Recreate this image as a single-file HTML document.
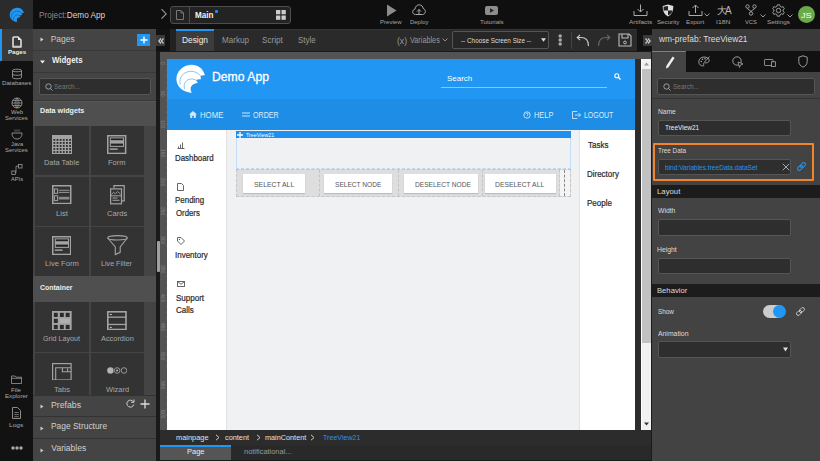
<!DOCTYPE html>
<html><head><meta charset="utf-8">
<style>
*{box-sizing:border-box;margin:0;padding:0}
html,body{width:820px;height:461px;overflow:hidden;background:#121212;font-family:"Liberation Sans",sans-serif;}
.a{position:absolute}
#top{left:0;top:0;width:820px;height:29px;background:#0f0f0f}
#logo{left:0;top:0;width:33px;height:29px;background:#2b2b2b}
#iconbar{left:0;top:29px;width:33px;height:432px;background:#121212}
.ib{position:absolute;left:0;width:33px;color:#bbb;font-size:6px;text-align:center;line-height:6px}
#lpanel{left:33px;top:29px;width:123px;height:432px;background:#444}
#tabbar{left:156px;top:29px;width:496px;height:22px;background:#2a2a2a;box-shadow:inset 0 1px 0 #343434}
#canvasbg{left:156px;top:51px;width:496px;height:410px;background:#1a1a1a}
#frame{left:160px;top:51px;width:475px;height:379px;background:#4d4d4d}
#rpanel{left:652px;top:29px;width:168px;height:432px;background:#434343}
.t{position:absolute;white-space:nowrap;transform-origin:0 0}
.btn{background:#fff;color:#555;font-size:7.5px;text-align:center;line-height:19px;box-shadow:0 1px 1px rgba(0,0,0,0.15)}
</style></head><body>

<div id="top" class="a">
 <div class="t" style="left:39.22px;top:10.00px;font-size:8.5px;color:#8a8a8a;transform:scaleX(0.965)">Project:<span style="color:#d8d8d8">Demo App</span></div>
 <svg class="a" style="left:160px;top:8px" width="8" height="12" viewBox="0 0 8 12"><path d="M1.5,1.2 L6.2,5.9 L1.5,10.6" fill="none" stroke="#9a9a9a" stroke-width="1.1"/></svg>
 <div class="a" style="left:170px;top:6px;width:121px;height:18px;border:1px solid #4e4e4e;border-radius:3px;background:#232323"></div>
 <div class="a" style="left:189px;top:7px;width:1px;height:16px;background:#4e4e4e"></div>
 <svg class="a" style="left:175px;top:9px" width="10" height="12" viewBox="0 0 10 12"><path d="M1.5,1.5 H6 L8.5,4 V10.5 H1.5 Z M6,1.5 V4 H8.5" fill="none" stroke="#777" stroke-width="1"/></svg>
 <div class="t" style="left:195.05px;top:10.00px;font-size:8.5px;font-weight:bold;color:#f2f2f2;transform:scaleX(0.952)">Main</div>
 <div class="a" style="left:215.3px;top:10.3px;width:2.6px;height:2.6px;border-radius:50%;background:#2d8ff0"></div>
 <svg class="a" style="left:276px;top:10px" width="10" height="10" viewBox="0 0 10 10"><rect x="0" y="0" width="4.3" height="4.3" fill="#ccc"/><rect x="5.5" y="0" width="4.3" height="4.3" fill="#ccc"/><rect x="0" y="5.5" width="4.3" height="4.3" fill="#ccc"/><rect x="5.5" y="5.5" width="4.3" height="4.3" fill="#ccc"/></svg>
 <svg class="a" style="left:386px;top:4px" width="11" height="13" viewBox="0 0 11 13"><path d="M1,0.5 L10.5,6.5 L1,12.5 Z" fill="#8c8c8c"/></svg>
 <div class="t" style="left:380.40px;top:19.00px;font-size:6px;color:#a6a6a6;transform:scaleX(1.011)">Preview</div>
 <svg class="a" style="left:412px;top:4px" width="14" height="12" viewBox="0 0 14 12"><path d="M3.5,10.5 C1.5,10.5 0.7,9 0.7,7.8 C0.7,6.3 1.8,5.3 3,5.2 C3.2,2.6 5,0.8 7.2,0.8 C9.4,0.8 11,2.4 11.2,4.6 C12.5,4.8 13.3,6 13.3,7.5 C13.3,9 12.3,10.5 10.5,10.5 Z" fill="none" stroke="#aaa" stroke-width="1"/><path d="M7,10.5 V5.5 M5,7.5 L7,5.5 L9,7.5" fill="none" stroke="#aaa" stroke-width="1"/></svg>
 <div class="t" style="left:409.51px;top:19.00px;font-size:6px;color:#a6a6a6;transform:scaleX(0.991)">Deploy</div>
 <svg class="a" style="left:485px;top:6px" width="13" height="9" viewBox="0 0 13 9"><rect x="0" y="0" width="13" height="9" rx="2" fill="#8c8c8c"/><path d="M5,2.3 L9,4.5 L5,6.7 Z" fill="#222"/></svg>
 <div class="t" style="left:479.56px;top:19.00px;font-size:6px;color:#a6a6a6;transform:scaleX(1.038)">Tutorials</div>

 <svg class="a" style="left:633px;top:4px" width="15" height="13" viewBox="0 0 15 13"><path d="M7.5,0.5 V8 M4.5,5 L7.5,8 L10.5,5" fill="none" stroke="#aaa" stroke-width="1"/><path d="M1,7 V11.5 H14 V7" fill="none" stroke="#aaa" stroke-width="1"/></svg>
 <div class="t" style="left:628.98px;top:19.00px;font-size:6px;color:#a6a6a6;transform:scaleX(1.072)">Artifacts</div>
 <svg class="a" style="left:662px;top:4px" width="12" height="13" viewBox="0 0 12 13"><path d="M6,0.6 L11.3,2 C11.3,7 10,10.5 6,12.4 C2,10.5 0.7,7 0.7,2 Z" fill="#ddd"/><path d="M6,2 V6.5 H1.6 C1.6,3.5 1.6,3 1.6,2.7 Z M6,6.5 H10.4 C10.1,8.8 8.8,10.4 6,11.3 Z" fill="#222"/></svg>
 <div class="t" style="left:656.72px;top:19.00px;font-size:6px;color:#a6a6a6;transform:scaleX(1.029)">Security</div>
 <svg class="a" style="left:688px;top:4px" width="15" height="13" viewBox="0 0 15 13"><path d="M7.5,9 V1 M4.5,4 L7.5,1 L10.5,4" fill="none" stroke="#aaa" stroke-width="1"/><path d="M1,7 V11.5 H14 V7" fill="none" stroke="#aaa" stroke-width="1"/></svg>
 <svg class="a" style="left:704px;top:13px" width="6" height="4" viewBox="0 0 6 4"><path d="M0.5,0.5 L3,3 L5.5,0.5" fill="none" stroke="#aaa" stroke-width="0.9"/></svg>
 <div class="t" style="left:686.28px;top:19.00px;font-size:6px;color:#a6a6a6;transform:scaleX(1.048)">Export</div>
 <div class="t" style="left:716.5px;top:4px;font-size:10px;color:#bbb;letter-spacing:-1.6px">&#22823;A</div>
 <div class="t" style="left:716.07px;top:19.00px;font-size:6px;color:#a6a6a6;transform:scaleX(1.135)">I18N</div>
 <svg class="a" style="left:745px;top:4px" width="12" height="12" viewBox="0 0 12 12"><circle cx="2.5" cy="2.5" r="1.7" fill="none" stroke="#aaa" stroke-width="0.9"/><circle cx="9.5" cy="2.5" r="1.7" fill="none" stroke="#aaa" stroke-width="0.9"/><circle cx="6" cy="9.5" r="1.7" fill="none" stroke="#aaa" stroke-width="0.9"/><path d="M2.5,4.2 C2.5,6 6,6 6,7.8 M9.5,4.2 C9.5,6 6,6 6,7.8" fill="none" stroke="#aaa" stroke-width="0.9"/></svg>
 <svg class="a" style="left:760px;top:14px" width="6" height="4" viewBox="0 0 6 4"><path d="M0.5,0.5 L3,3 L5.5,0.5" fill="none" stroke="#aaa" stroke-width="0.9"/></svg>
 <div class="t" style="left:744.97px;top:19.00px;font-size:6px;color:#a6a6a6;transform:scaleX(0.963)">VCS</div>
 <svg class="a" style="left:772px;top:4px" width="13" height="13" viewBox="0 0 13 13"><path d="M5.3,0.8 H7.7 L8.1,2.4 L9.6,3.2 L11.1,2.6 L12.3,4.7 L11.1,5.8 V7.2 L12.3,8.3 L11.1,10.4 L9.6,9.8 L8.1,10.6 L7.7,12.2 H5.3 L4.9,10.6 L3.4,9.8 L1.9,10.4 L0.7,8.3 L1.9,7.2 V5.8 L0.7,4.7 L1.9,2.6 L3.4,3.2 L4.9,2.4 Z" fill="none" stroke="#aaa" stroke-width="0.9"/><circle cx="6.5" cy="6.5" r="2.2" fill="none" stroke="#aaa" stroke-width="0.9"/></svg>
 <svg class="a" style="left:787px;top:14px" width="6" height="4" viewBox="0 0 6 4"><path d="M0.5,0.5 L3,3 L5.5,0.5" fill="none" stroke="#aaa" stroke-width="0.9"/></svg>
 <div class="t" style="left:767.31px;top:19.00px;font-size:6px;color:#a6a6a6;transform:scaleX(1.057)">Settings</div>
 <div class="a" style="left:798px;top:6px;width:17px;height:17px;border-radius:50%;background:#6aaa4a"></div>
 <div class="t" style="left:801.36px;top:11.00px;font-size:8px;color:#fff;transform:scaleX(1.129)">JS</div>
</div>
<div id="logo" class="a"><svg class="a" style="left:9px;top:6.85px" width="16" height="16" viewBox="0 0 32 32"><path fill="#2196f3" d="M29.9,12.2 C28,5 22.5,1.5 16,1.7 C7.8,2 1.4,8.5 1.4,16 C1.4,23 7,29 16.7,29.9 C15.3,27.5 15.3,24.5 16.5,23 C17.8,21.3 20,20.3 22.9,20.1 C22.3,18.8 21.6,17.5 20.8,17 C22.5,16.3 24.5,16.2 26,16.3 C25.8,15 25.5,13.6 25.7,12.8 C27,12.2 28.5,12 29.9,12.2 Z"/><path d="M5.2,21.5 C3.5,14 9,8.3 16,8.3 C19.5,8.3 23,9.8 25.7,12.8 M9.5,26 C8,20 11.5,16 16.7,16 C18.5,16 19.8,16.4 20.8,17" fill="none" stroke="#2b2b2b" stroke-width="0.7"/></svg></div>


<div id="iconbar" class="a">
 <div class="a" style="left:0;top:0;width:33px;height:32px;background:#3a3a3a"></div>
 <div class="a" style="left:0;top:0;width:2px;height:32px;background:#2196f3"></div>
</div>
<div class="a" style="left:0;top:29px;width:33px;height:432px">
 <svg class="a" style="left:12px;top:6.7px" width="10" height="12.2" viewBox="0 0 10 12.2"><path d="M1,10.5 V2 Q1,1 2,1 H6 L9,4 V10.5 Z" fill="#3a3a3a" stroke="#ddd" stroke-width="1.6"/><path d="M6,1 V4 H9" fill="#eee"/><path d="M0.6,11.3 H9.4" stroke="#b8b8b8" stroke-width="1.6"/></svg>
 <div class="t" style="left:7.59px;top:20.00px;font-size:6px;font-weight:bold;color:#eee;transform:scaleX(1.022)">Pages</div>
 <svg class="a" style="left:11px;top:39px" width="12" height="12" viewBox="0 0 12 12"><path d="M1.5,2.5 C1.5,0.8 10.5,0.8 10.5,2.5 V9.5 C10.5,11.2 1.5,11.2 1.5,9.5 Z M1.5,2.5 C1.5,4.2 10.5,4.2 10.5,2.5 M1.5,6 C1.5,7.7 10.5,7.7 10.5,6" fill="none" stroke="#999" stroke-width="0.9"/></svg>
 <div class="t" style="left:2.09px;top:51.00px;font-size:5.6px;color:#aaa;transform:scaleX(1.097)">Databases</div>
 <svg class="a" style="left:11px;top:68px" width="12" height="12" viewBox="0 0 12 12"><circle cx="6" cy="6" r="5" fill="none" stroke="#999" stroke-width="0.9"/><path d="M1,6 H11 M1.7,3.5 H10.3 M1.7,8.5 H10.3 M6,1 V11 M6,1 C3.5,3 3.5,9 6,11 M6,1 C8.5,3 8.5,9 6,11" fill="none" stroke="#999" stroke-width="0.7"/></svg>
 <div class="t" style="left:10.77px;top:80.00px;font-size:5.6px;color:#aaa;transform:scaleX(1.058)">Web</div><div class="t" style="left:5.33px;top:86.00px;font-size:5.6px;color:#aaa;transform:scaleX(1.056)">Services</div>
 <svg class="a" style="left:11px;top:100px" width="12" height="11" viewBox="0 0 12 11"><path d="M4,0.5 V2.5 M6,0.5 V2.5 M8,0.5 V2.5" stroke="#999" stroke-width="0.7"/><path d="M1,4 H11 C11,8 9,10 6,10 C3,10 1,8 1,4 Z" fill="none" stroke="#999" stroke-width="0.9"/></svg>
 <div class="t" style="left:11.21px;top:112.00px;font-size:5.6px;color:#aaa;transform:scaleX(1.030)">Java</div><div class="t" style="left:5.33px;top:118.00px;font-size:5.6px;color:#aaa;transform:scaleX(1.056)">Services</div>
 <svg class="a" style="left:11px;top:135px" width="12" height="11" viewBox="0 0 12 11"><rect x="7.5" y="0.5" width="3.5" height="3.5" fill="none" stroke="#999" stroke-width="0.8"/><rect x="0.8" y="7" width="3.5" height="3.5" fill="none" stroke="#999" stroke-width="0.8"/><path d="M7.5,2.2 H5 V8.7 H4.3" fill="none" stroke="#999" stroke-width="0.8"/></svg>
 <div class="t" style="left:10.79px;top:147.00px;font-size:5.6px;color:#aaa;transform:scaleX(1.015)">APIs</div>
 <svg class="a" style="left:11px;top:346px" width="11" height="9" viewBox="0 0 11 9"><path d="M0.5,1 H4 L5,2.2 H10.5 V8.5 H0.5 Z M0.5,3.3 H10.5" fill="none" stroke="#999" stroke-width="0.8"/></svg>
 <div class="t" style="left:10.98px;top:358.00px;font-size:5.6px;color:#aaa;transform:scaleX(1.118)">File</div><div class="t" style="left:4.69px;top:364.00px;font-size:5.6px;color:#aaa;transform:scaleX(1.099)">Explorer</div>
 <svg class="a" style="left:12px;top:378px" width="9" height="12" viewBox="0 0 9 12"><path d="M0.5,0.5 H5.5 L8.5,3.5 V11.5 H0.5 Z" fill="none" stroke="#999" stroke-width="0.9"/><path d="M2.3,5.5 H6.7 M2.3,7.6 H6.7 M2.3,9.7 H6.7" stroke="#999" stroke-width="0.7"/></svg>
 <div class="t" style="left:8.86px;top:393.00px;font-size:5.6px;color:#aaa;transform:scaleX(1.176)">Logs</div>
 <svg class="a" style="left:10.5px;top:416.5px" width="12" height="4" viewBox="0 0 12 4"><circle cx="2" cy="2" r="1.7" fill="#aaa"/><circle cx="6" cy="2" r="1.7" fill="#aaa"/><circle cx="10" cy="2" r="1.7" fill="#aaa"/></svg>
</div>
<div id="lpanel" class="a">
 <div class="a" style="left:0;top:0;width:123px;height:22px;border-bottom:1px solid #383838"></div>
 <svg class="a" style="left:7px;top:8px" width="4" height="5" viewBox="0 0 4 5"><path d="M0.5,0.5 L3.5,2.5 L0.5,4.5 Z" fill="#d8d8d8"/></svg>
 <div class="t" style="left:17.70px;top:5.00px;font-size:8.5px;color:#c8c8c8">Pages</div>
 <div class="a" style="left:104px;top:5px;width:13px;height:12px;background:#2196f3"></div>
 <svg class="a" style="left:106.5px;top:7px" width="8" height="8" viewBox="0 0 8 8"><path d="M4,0.5 V7.5 M0.5,4 H7.5" stroke="#fff" stroke-width="1.4"/></svg>
 <div class="a" style="left:0;top:22px;width:123px;height:22px;border-bottom:1px solid #383838"></div>
 <svg class="a" style="left:7px;top:31px" width="5" height="4" viewBox="0 0 5 4"><path d="M0,0.5 H5 L2.5,3.5 Z" fill="#eee"/></svg>
 <div class="t" style="left:18.60px;top:26.00px;font-size:8.5px;font-weight:bold;color:#f0f0f0;transform:scaleX(0.925)">Widgets</div>
 <div class="a" style="left:6px;top:49px;width:112px;height:17px;background:#2e2e2e;border:1px solid #555;border-radius:2px"></div>
 <svg class="a" style="left:12px;top:54px" width="8" height="8" viewBox="0 0 8 8"><circle cx="3.5" cy="3.5" r="2.7" fill="none" stroke="#aaa" stroke-width="0.9"/><path d="M5.5,5.5 L7.5,7.5" stroke="#aaa" stroke-width="0.9"/></svg>
 <div class="t" style="left:21.41px;top:54.00px;font-size:7px;color:#777;transform:scaleX(0.935)">Search...</div>
 <div class="a" style="left:0;top:71px;width:123px;height:26px;background:#4f4f4f;border-top:1px solid #393939"></div>
 <div class="a" style="left:0;top:72px;width:123px;height:1px;background:#575757"></div>
 <div class="t" style="left:6.91px;top:77.00px;font-size:7.5px;font-weight:bold;color:#eee;transform:scaleX(0.959)">Data widgets</div>
</div>
<div class="a" style="left:33px;top:29px;width:123px;height:366px;overflow:hidden">
 <div class="a" style="left:2px;top:97px;width:54px;height:49px;background:#333"></div>
 <div class="a" style="left:57.5px;top:97px;width:53.5px;height:49px;background:#333"></div>
 <div class="a" style="left:2px;top:147.5px;width:54px;height:49px;background:#333"></div>
 <div class="a" style="left:57.5px;top:147.5px;width:53.5px;height:49px;background:#333"></div>
 <div class="a" style="left:2px;top:198px;width:54px;height:49px;background:#333"></div>
 <div class="a" style="left:57.5px;top:198px;width:53.5px;height:49px;background:#333"></div>
 <div class="a" style="left:0;top:247px;width:123px;height:26px;background:#4f4f4f"></div>
 <div class="t" style="left:7.12px;top:254.00px;font-size:7.5px;font-weight:bold;color:#eee;transform:scaleX(0.928)">Container</div>
 <div class="a" style="left:2px;top:273px;width:54px;height:50px;background:#333"></div>
 <div class="a" style="left:57.5px;top:273px;width:53.5px;height:50px;background:#333"></div>
 <div class="a" style="left:2px;top:324px;width:54px;height:50px;background:#333"></div>
 <div class="a" style="left:57.5px;top:324px;width:53.5px;height:50px;background:#333"></div>
</div>

<div class="a" style="left:33px;top:29px;width:123px;height:366px;overflow:hidden;pointer-events:none">
 <div class="t" style="left:11.09px;top:129.00px;font-size:8px;color:#a8a8a8;transform:scaleX(0.925)">Data Table</div>
 <div class="t" style="left:75.28px;top:129.00px;font-size:8px;color:#a8a8a8;transform:scaleX(0.938)">Form</div>
 <div class="t" style="left:22.81px;top:180.00px;font-size:8px;color:#a8a8a8;transform:scaleX(0.950)">List</div>
 <div class="t" style="left:73.81px;top:180.00px;font-size:8px;color:#a8a8a8;transform:scaleX(0.950)">Cards</div>
 <div class="t" style="left:12.04px;top:230.00px;font-size:8px;color:#a8a8a8;transform:scaleX(0.950)">Live Form</div>
 <div class="t" style="left:68.11px;top:230.00px;font-size:8px;color:#a8a8a8;transform:scaleX(0.894)">Live Filter</div>
 <div class="t" style="left:10.14px;top:305.00px;font-size:8px;color:#a8a8a8;transform:scaleX(0.892)">Grid Layout</div>
 <div class="t" style="left:67.88px;top:305.00px;font-size:8px;color:#a8a8a8;transform:scaleX(0.922)">Accordion</div>
 <div class="t" style="left:21.02px;top:356.00px;font-size:8px;color:#a8a8a8;transform:scaleX(0.950)">Tabs</div>
 <div class="t" style="left:72.96px;top:356.00px;font-size:8px;color:#a8a8a8;transform:scaleX(0.924)">Wizard</div>
</div>
<svg class="a" style="left:51.75px;top:134.8px" width="20.3" height="19.3" viewBox="0 0 20.3 19.3"><rect x="0" y="0" width="20.3" height="19.3" fill="#a3a3a3"/><rect x="1.45" y="4.00" width="1.80" height="1.80" fill="#2b2b2b"/><rect x="1.45" y="7.03" width="1.80" height="1.80" fill="#2b2b2b"/><rect x="1.45" y="10.06" width="1.80" height="1.80" fill="#2b2b2b"/><rect x="1.45" y="13.09" width="1.80" height="1.80" fill="#2b2b2b"/><rect x="1.45" y="16.12" width="1.80" height="1.80" fill="#2b2b2b"/><rect x="4.59" y="4.00" width="1.80" height="1.80" fill="#2b2b2b"/><rect x="4.59" y="7.03" width="1.80" height="1.80" fill="#2b2b2b"/><rect x="4.59" y="10.06" width="1.80" height="1.80" fill="#2b2b2b"/><rect x="4.59" y="13.09" width="1.80" height="1.80" fill="#2b2b2b"/><rect x="4.59" y="16.12" width="1.80" height="1.80" fill="#2b2b2b"/><rect x="7.73" y="4.00" width="1.80" height="1.80" fill="#2b2b2b"/><rect x="7.73" y="7.03" width="1.80" height="1.80" fill="#2b2b2b"/><rect x="7.73" y="10.06" width="1.80" height="1.80" fill="#2b2b2b"/><rect x="7.73" y="13.09" width="1.80" height="1.80" fill="#2b2b2b"/><rect x="7.73" y="16.12" width="1.80" height="1.80" fill="#2b2b2b"/><rect x="10.87" y="4.00" width="1.80" height="1.80" fill="#2b2b2b"/><rect x="10.87" y="7.03" width="1.80" height="1.80" fill="#2b2b2b"/><rect x="10.87" y="10.06" width="1.80" height="1.80" fill="#2b2b2b"/><rect x="10.87" y="13.09" width="1.80" height="1.80" fill="#2b2b2b"/><rect x="10.87" y="16.12" width="1.80" height="1.80" fill="#2b2b2b"/><rect x="14.01" y="4.00" width="1.80" height="1.80" fill="#2b2b2b"/><rect x="14.01" y="7.03" width="1.80" height="1.80" fill="#2b2b2b"/><rect x="14.01" y="10.06" width="1.80" height="1.80" fill="#2b2b2b"/><rect x="14.01" y="13.09" width="1.80" height="1.80" fill="#2b2b2b"/><rect x="14.01" y="16.12" width="1.80" height="1.80" fill="#2b2b2b"/><rect x="17.15" y="4.00" width="1.80" height="1.80" fill="#2b2b2b"/><rect x="17.15" y="7.03" width="1.80" height="1.80" fill="#2b2b2b"/><rect x="17.15" y="10.06" width="1.80" height="1.80" fill="#2b2b2b"/><rect x="17.15" y="13.09" width="1.80" height="1.80" fill="#2b2b2b"/><rect x="17.15" y="16.12" width="1.80" height="1.80" fill="#2b2b2b"/></svg>
<svg class="a" style="left:107.2px;top:134.8px" width="19.4" height="19.2" viewBox="0 0 19.4 19.2"><rect x="0.75" y="0.75" width="17.9" height="17.7" fill="none" stroke="#a3a3a3" stroke-width="1.5"/><rect x="2.8" y="2.4" width="14.2" height="9.5" fill="#a3a3a3"/><rect x="3.8" y="3.4" width="12.2" height="1.8" fill="#222"/><rect x="3.8" y="8.6" width="12.2" height="2.2" fill="#222"/><rect x="2.8" y="13.4" width="7.8" height="1.5" fill="#a3a3a3"/></svg>
<svg class="a" style="left:52.1px;top:185.2px" width="19.5" height="19.3" viewBox="0 0 19.5 19.3"><rect x="0.75" y="0.75" width="18" height="17.8" fill="none" stroke="#a3a3a3" stroke-width="1.5"/><rect x="2.4" y="4" width="3.2" height="4.3" fill="none" stroke="#a3a3a3" stroke-width="1"/><rect x="2.4" y="10.8" width="3.2" height="4.8" fill="none" stroke="#a3a3a3" stroke-width="1"/><rect x="6.8" y="4.8" width="10.6" height="0.9" fill="#a3a3a3"/><rect x="6.8" y="6.9" width="10.6" height="0.9" fill="#a3a3a3"/><rect x="6.8" y="11.8" width="10.6" height="2.7" fill="#8a8a8a"/></svg>
<svg class="a" style="left:109.7px;top:185.2px" width="15" height="19.5" viewBox="0 0 15 19.5"><path d="M4,3 V0.6 H14.2 V15.8 H12" fill="none" stroke="#a3a3a3" stroke-width="1.2"/><rect x="0.6" y="3.9" width="10.9" height="14.9" fill="#333" stroke="#a3a3a3" stroke-width="1.2"/><path d="M1.5,9.5 L3.5,7.3 L5.5,8.8 L7.5,6.5 L10.5,9" fill="none" stroke="#a3a3a3" stroke-width="0.9"/><path d="M0.6,10.8 H11.5" stroke="#a3a3a3" stroke-width="1"/><path d="M2.5,13 H7.5 M2.5,15.3 H9.5" stroke="#a3a3a3" stroke-width="1"/></svg>
<svg class="a" style="left:51.9px;top:235.6px" width="19.4" height="19.2" viewBox="0 0 19.4 19.2"><rect x="0.75" y="0.75" width="17.9" height="17.7" fill="none" stroke="#a3a3a3" stroke-width="1.5"/><rect x="2.8" y="2.4" width="14.2" height="9.5" fill="#a3a3a3"/><rect x="3.8" y="3.4" width="12.2" height="1.8" fill="#222"/><rect x="3.8" y="8.6" width="12.2" height="2.2" fill="#222"/><rect x="2.8" y="13.4" width="7.8" height="1.5" fill="#a3a3a3"/></svg>
<svg class="a" style="left:106.5px;top:235px" width="21" height="20.5" viewBox="0 0 21 20.5"><ellipse cx="10.5" cy="2.8" rx="9.8" ry="2.2" fill="none" stroke="#a3a3a3" stroke-width="1.1"/><path d="M0.7,3 L8.3,12 V19.6 L13.2,17.3 V12 L20.3,3" fill="none" stroke="#a3a3a3" stroke-width="1.1"/></svg>
<svg class="a" style="left:51.9px;top:311.2px" width="19.7" height="19.3" viewBox="0 0 19.7 19.3"><rect x="0" y="0" width="19.7" height="19.3" fill="#a3a3a3"/><rect x="1.85" y="1.80" width="3.90" height="4.20" fill="#2b2b2b"/><rect x="1.85" y="7.80" width="3.90" height="4.20" fill="#2b2b2b"/><rect x="1.85" y="13.90" width="3.90" height="4.20" fill="#2b2b2b"/><rect x="7.90" y="1.80" width="3.90" height="4.20" fill="#2b2b2b"/><rect x="7.90" y="13.90" width="3.90" height="4.20" fill="#2b2b2b"/><rect x="13.70" y="1.80" width="3.90" height="4.20" fill="#2b2b2b"/><rect x="13.70" y="13.90" width="3.90" height="4.20" fill="#2b2b2b"/><rect x="7.9" y="7.8" width="10" height="4.2" fill="#b0b0b0"/></svg>
<svg class="a" style="left:107.2px;top:311.2px" width="19.8" height="19.3" viewBox="0 0 19.8 19.3"><rect x="0.8" y="0.8" width="18.2" height="17.7" fill="none" stroke="#a3a3a3" stroke-width="1.6"/><rect x="0" y="5.5" width="19.8" height="1.3" fill="#a3a3a3"/><rect x="0" y="12.8" width="19.8" height="1.3" fill="#a3a3a3"/><rect x="2.8" y="3" width="2" height="1" fill="#ccc"/><rect x="2.8" y="15.9" width="2" height="1" fill="#ccc"/></svg>
<svg class="a" style="left:52.1px;top:362.7px" width="19.7" height="17.6" viewBox="0 0 19.7 17.6"><rect x="0.6" y="0.6" width="18.5" height="16.4" fill="none" stroke="#a3a3a3" stroke-width="1.2"/><path d="M3.7,17 V4.7 H19.1 M10.4,4.7 V8.8 H19.1 M15.6,5.5 V8.2" fill="none" stroke="#a3a3a3" stroke-width="1.1"/></svg>
<svg class="a" style="left:106.8px;top:367.2px" width="20.6" height="7" viewBox="0 0 20.6 7"><circle cx="3.4" cy="3.5" r="3.2" fill="#b3b3b3"/><circle cx="10.1" cy="3.5" r="2.8" fill="none" stroke="#a3a3a3" stroke-width="0.9"/><circle cx="10.1" cy="3.5" r="0.9" fill="#ccc"/><circle cx="17" cy="3.5" r="2.8" fill="none" stroke="#a3a3a3" stroke-width="0.9"/></svg>
<div class="a" style="left:33px;top:395px;width:123px;height:66px;background:#444">
 <div class="a" style="left:0;top:0;width:123px;height:1px;background:#333"></div>
 <div class="a" style="left:0;top:21px;width:123px;height:1px;background:#333"></div>
 <div class="a" style="left:0;top:43px;width:123px;height:1px;background:#333"></div>
 <svg class="a" style="left:7px;top:9px" width="4" height="5" viewBox="0 0 4 5"><path d="M0.5,0.5 L3.5,2.5 L0.5,4.5 Z" fill="#ccc"/></svg>
 <div class="t" style="left:17.68px;top:5.00px;font-size:8.5px;color:#d0d0d0;transform:scaleX(1.025)">Prefabs</div>
 <svg class="a" style="left:93px;top:4px" width="9" height="9" viewBox="0 0 9 9"><path d="M7.5,3 A3.5,3.5 0 1 0 7.8,5.5" fill="none" stroke="#ccc" stroke-width="1"/><path d="M8,0.5 V3.3 H5.2" fill="none" stroke="#ccc" stroke-width="1"/></svg>
 <svg class="a" style="left:107px;top:4px" width="10" height="10" viewBox="0 0 10 10"><path d="M5,0.5 V9.5 M0.5,5 H9.5" stroke="#ddd" stroke-width="1.3"/></svg>
 <svg class="a" style="left:7px;top:31px" width="4" height="5" viewBox="0 0 4 5"><path d="M0.5,0.5 L3.5,2.5 L0.5,4.5 Z" fill="#ccc"/></svg>
 <div class="t" style="left:17.71px;top:26.00px;font-size:8.5px;color:#d0d0d0;transform:scaleX(0.989)">Page Structure</div>
 <svg class="a" style="left:7px;top:53px" width="4" height="5" viewBox="0 0 4 5"><path d="M0.5,0.5 L3.5,2.5 L0.5,4.5 Z" fill="#ccc"/></svg>
 <div class="t" style="left:18.36px;top:48.00px;font-size:8.5px;color:#d0d0d0">Variables</div>
</div>
<div class="a" style="left:156px;top:29px;width:4px;height:432px;background:#121212"></div>



<div id="tabbar" class="a">
 <div class="a" style="left:0;top:0;width:14px;height:22px;background:#121212"></div>
 <div class="a" style="left:0px;top:6px;width:9px;height:11px;background:#3a3a3a"></div>
 <svg class="a" style="left:1.5px;top:8.5px" width="6" height="6" viewBox="0 0 6 6"><path d="M3,0.5 L0.8,3 L3,5.5 M5.5,0.5 L3.3,3 L5.5,5.5" fill="none" stroke="#ccc" stroke-width="1.15"/></svg>
 <div class="a" style="left:14px;top:0;width:6px;height:22px;background:#222"></div>
 <div class="a" style="left:20px;top:0;width:38px;height:22px;background:#3c3c3c;border-top:2px solid #2196f3"></div>
 <div class="t" style="left:26.01px;top:6.00px;font-size:8.5px;color:#eee;transform:scaleX(0.983)">Design</div>
 <div class="t" style="left:65.53px;top:6.00px;font-size:8.5px;color:#999;transform:scaleX(0.949)">Markup</div>
 <div class="t" style="left:106.43px;top:6.00px;font-size:8.5px;color:#999;transform:scaleX(0.959)">Script</div>
 <div class="t" style="left:142.04px;top:6.00px;font-size:8.5px;color:#999;transform:scaleX(0.937)">Style</div>
 <div class="t" style="left:241.46px;top:7.00px;font-size:9px;color:#999;transform:scaleX(0.959)">(x)</div>
 <div class="t" style="left:253.96px;top:6.00px;font-size:8.5px;color:#999;transform:scaleX(0.856)">Variables</div>
 <svg class="a" style="left:286px;top:9px" width="6" height="4" viewBox="0 0 6 4"><path d="M0.5,0.5 L3,3 L5.5,0.5" fill="none" stroke="#999" stroke-width="0.9"/></svg>
 <div class="a" style="left:296px;top:2px;width:97px;height:18px;border:1px solid #555;border-radius:2px;background:#262626"></div>
 <div class="t" style="left:304.71px;top:7.00px;font-size:7.5px;color:#ddd;transform:scaleX(0.849)">-- Choose Screen Size --</div>
 <svg class="a" style="left:385px;top:9px" width="5" height="4" viewBox="0 0 5 4"><path d="M0,0.3 H5 L2.5,3.7 Z" fill="#ddd"/></svg>
 <svg class="a" style="left:402px;top:5px" width="4.4" height="12" viewBox="0 0 4.4 12"><circle cx="2.2" cy="1.9" r="1.75" fill="#aaa"/><circle cx="2.2" cy="6" r="1.75" fill="#aaa"/><circle cx="2.2" cy="10.1" r="1.75" fill="#aaa"/></svg>
 <div class="a" style="left:415px;top:3px;width:1px;height:17px;background:#444"></div>
 <svg class="a" style="left:420px;top:5px" width="14" height="13" viewBox="0 0 14 13"><path d="M12.5,12 C12.5,6 9.5,3.5 5,3.5 H1.5 M4,0.8 L1.2,3.5 L4,6.2" fill="none" stroke="#ccc" stroke-width="1.1"/></svg>
 <svg class="a" style="left:441px;top:5px" width="14" height="13" viewBox="0 0 14 13"><path d="M1.5,12 C1.5,6 4.5,3.5 9,3.5 H12.5 M10,0.8 L12.8,3.5 L10,6.2" fill="none" stroke="#666" stroke-width="1.1"/></svg>
 <svg class="a" style="left:462px;top:4px" width="14" height="14" viewBox="0 0 14 14"><path d="M1,1 H11 L13,3 V13 H1 Z" fill="none" stroke="#bbb" stroke-width="1.1"/><path d="M4,1 V5 H10 V1" fill="none" stroke="#bbb" stroke-width="1.1"/><circle cx="7" cy="9.5" r="1.4" fill="none" stroke="#bbb" stroke-width="1"/></svg>
 <div class="a" style="left:481px;top:0;width:15px;height:22px;background:#121212"></div>
 <div class="a" style="left:487px;top:6px;width:9px;height:11px;background:#3a3a3a"></div>
 <svg class="a" style="left:488.5px;top:9px" width="6" height="6" viewBox="0 0 6 6"><path d="M0.5,0.5 L2.7,3 L0.5,5.5 M3,0.5 L5.2,3 L3,5.5" fill="none" stroke="#ccc" stroke-width="1.15"/></svg>
</div>
<div id="canvasbg" class="a"></div>
<div class="a" style="left:160px;top:52px;width:491px;height:7px;background:#535353"></div>
<div class="a" style="left:160px;top:52px;width:7px;height:378px;background:#535353"></div><div class="a" style="left:165.5px;top:64px;width:1.5px;height:366px;background:repeating-linear-gradient(to bottom,#666 0,#666 0.8px,transparent 0.8px,transparent 6.05px)"></div>
<div class="a" style="left:635px;top:59px;width:6px;height:371px;background:#2d2d2d"></div>
<div class="a" style="left:641px;top:59px;width:10px;height:371px;background:#f1f1f1;border-left:1px solid #fff"></div>
<div class="a" style="left:642px;top:69px;width:9px;height:274px;background:#c1c1c1"></div>
<svg class="a" style="left:644px;top:62px" width="5" height="4" viewBox="0 0 5 4"><path d="M0,3.5 H5 L2.5,0.5 Z" fill="#999"/></svg>
<svg class="a" style="left:644px;top:422px" width="5" height="4" viewBox="0 0 5 4"><path d="M0,0.5 H5 L2.5,3.5 Z" fill="#333"/></svg>
<div class="a" style="left:159.5px;top:62px;writing-mode:vertical-rl;font-size:5px;line-height:5px;color:#8a8a8a;white-space:nowrap">0</div><div class="a" style="left:159.5px;top:91px;writing-mode:vertical-rl;font-size:5px;line-height:5px;color:#8a8a8a;white-space:nowrap">50</div><div class="a" style="left:159.5px;top:120px;writing-mode:vertical-rl;font-size:5px;line-height:5px;color:#8a8a8a;white-space:nowrap">100</div><div class="a" style="left:159.5px;top:149px;writing-mode:vertical-rl;font-size:5px;line-height:5px;color:#8a8a8a;white-space:nowrap">150</div><div class="a" style="left:159.5px;top:178px;writing-mode:vertical-rl;font-size:5px;line-height:5px;color:#8a8a8a;white-space:nowrap">200</div><div class="a" style="left:159.5px;top:207px;writing-mode:vertical-rl;font-size:5px;line-height:5px;color:#8a8a8a;white-space:nowrap">250</div><div class="a" style="left:159.5px;top:236px;writing-mode:vertical-rl;font-size:5px;line-height:5px;color:#8a8a8a;white-space:nowrap">300</div><div class="a" style="left:159.5px;top:265px;writing-mode:vertical-rl;font-size:5px;line-height:5px;color:#8a8a8a;white-space:nowrap">350</div><div class="a" style="left:159.5px;top:294px;writing-mode:vertical-rl;font-size:5px;line-height:5px;color:#8a8a8a;white-space:nowrap">400</div><div class="a" style="left:159.5px;top:323px;writing-mode:vertical-rl;font-size:5px;line-height:5px;color:#8a8a8a;white-space:nowrap">450</div><div class="a" style="left:159.5px;top:352px;writing-mode:vertical-rl;font-size:5px;line-height:5px;color:#8a8a8a;white-space:nowrap">500</div><div class="a" style="left:159.5px;top:381px;writing-mode:vertical-rl;font-size:5px;line-height:5px;color:#8a8a8a;white-space:nowrap">550</div><div class="a" style="left:159.5px;top:410px;writing-mode:vertical-rl;font-size:5px;line-height:5px;color:#8a8a8a;white-space:nowrap">600</div>
<div id="page" class="a" style="left:167px;top:59px;width:468px;height:371px;background:#f0f1f3;overflow:hidden">
 <div class="a" style="left:0;top:0;width:468px;height:40px;background:#2196f3"></div>
 <div class="a" style="left:0;top:40px;width:468px;height:31px;background:#1e8de6"></div>
 <svg class="a" style="left:8px;top:4px" width="32" height="32" viewBox="0 0 32 32"><path fill="#fff" d="M29.9,12.2 C28,5 22.5,1.5 16,1.7 C7.8,2 1.4,8.5 1.4,16 C1.4,23 7,29 16.7,29.9 C15.3,27.5 15.3,24.5 16.5,23 C17.8,21.3 20,20.3 22.9,20.1 C22.3,18.8 21.6,17.5 20.8,17 C22.5,16.3 24.5,16.2 26,16.3 C25.8,15 25.5,13.6 25.7,12.8 C27,12.2 28.5,12 29.9,12.2 Z"/><path d="M5.2,21.5 C3.5,14 9,8.3 16,8.3 C19.5,8.3 23,9.8 25.7,12.8 M9.5,26 C8,20 11.5,16 16.7,16 C18.5,16 19.8,16.4 20.8,17" fill="none" stroke="#2196f3" stroke-width="0.55"/></svg>
 <div class="t" style="-webkit-text-stroke:0.3px #fff;left:44.99px;top:11.00px;font-size:12.5px;color:#fff;transform:scaleX(0.977)">Demo App</div>
 <div class="t" style="left:280.34px;top:15.00px;font-size:8px;color:#fff;transform:scaleX(0.993)">Search</div>
 <div class="a" style="left:273.5px;top:28px;width:166.5px;height:1px;background:#8ac6f8"></div>
 <svg class="a" style="left:447px;top:14px" width="7" height="7" viewBox="0 0 7 7"><circle cx="2.8" cy="2.8" r="2" fill="none" stroke="#fff" stroke-width="1.1"/><path d="M4.3,4.3 L6.5,6.5" stroke="#fff" stroke-width="1.4"/></svg>
 <svg class="a" style="left:22px;top:52px" width="8" height="7" viewBox="0 0 8 7"><path d="M4,0 L8,3.6 H6.8 V7 H4.8 V4.8 H3.2 V7 H1.2 V3.6 H0 Z" fill="#d4e9fc"/></svg>
 <div class="t" style="left:33.16px;top:51.00px;font-size:8.4px;color:#dcedfc;transform:scaleX(0.928)">HOME</div>
 <svg class="a" style="left:75px;top:53px" width="8" height="5" viewBox="0 0 8 5"><path d="M0,1 H8 M0,4 H8" stroke="#cfe6fb" stroke-width="1"/></svg>
 <div class="t" style="left:85.86px;top:51.00px;font-size:8.4px;color:#dcedfc;transform:scaleX(0.849)">ORDER</div>
 <svg class="a" style="left:356px;top:52px" width="8" height="8" viewBox="0 0 8 8"><circle cx="4" cy="4" r="3.2" fill="none" stroke="#cfe6fb" stroke-width="0.9"/><path d="M2.9,3.1 C2.9,1.8 5.1,1.8 5.1,3.1 C5.1,4 4,4 4,5" fill="none" stroke="#cfe6fb" stroke-width="0.8"/></svg>
 <div class="t" style="left:367.29px;top:51.00px;font-size:8.4px;color:#dcedfc;transform:scaleX(0.884)">HELP</div>
 <svg class="a" style="left:405px;top:52px" width="9" height="8" viewBox="0 0 9 8"><path d="M5,1 V0.5 H0.5 V7.5 H5 V7 M3,4 H8.5 M6.5,2 L8.5,4 L6.5,6" fill="none" stroke="#cfe6fb" stroke-width="0.9"/></svg>
 <div class="t" style="left:416.53px;top:51.00px;font-size:8.4px;color:#dcedfc;transform:scaleX(0.827)">LOGOUT</div>

 <div class="a" style="left:0;top:71px;width:60px;height:300px;background:#fff;border-right:1px solid #e2e2e2"></div>
 <svg class="a" style="left:9.5px;top:83px" width="8" height="7" viewBox="0 0 8 7"><path d="M0.5,6.5 H7.5 M1.5,6 V4.5 M3.5,6 V2.5 M5.5,6 V0.5" stroke="#555" stroke-width="0.9"/></svg>
 <div class="t" style="-webkit-text-stroke:0.2px #2a2a2a;left:8.35px;top:94.00px;font-size:8.3px;color:#2a2a2a;transform:scaleX(0.950)">Dashboard</div>
 <svg class="a" style="left:10px;top:124px" width="7" height="8" viewBox="0 0 7 8"><path d="M0.5,0.5 H4.5 L6.5,2.5 V7.5 H0.5 Z" fill="none" stroke="#555" stroke-width="0.9"/></svg>
 <div class="t" style="-webkit-text-stroke:0.2px #2a2a2a;left:8.34px;top:136.00px;font-size:8.3px;color:#2a2a2a;transform:scaleX(0.957)">Pending</div><div class="t" style="-webkit-text-stroke:0.2px #2a2a2a;left:8.63px;top:149.00px;font-size:8.3px;color:#2a2a2a;transform:scaleX(0.940)">Orders</div>
 <svg class="a" style="left:9.5px;top:178px" width="8" height="8" viewBox="0 0 8 8"><path d="M0.5,0.5 H4 L7.5,4 L4,7.5 L0.5,4 Z" fill="none" stroke="#555" stroke-width="0.9"/><circle cx="2.4" cy="2.4" r="0.6" fill="#555"/></svg>
 <div class="t" style="-webkit-text-stroke:0.2px #2a2a2a;left:8.26px;top:191.00px;font-size:8.3px;color:#2a2a2a;transform:scaleX(0.960)">Inventory</div>
 <svg class="a" style="left:9.5px;top:221.5px" width="8" height="6" viewBox="0 0 8 6"><rect x="0.5" y="0.5" width="7" height="5" fill="none" stroke="#555" stroke-width="0.9"/><path d="M0.5,0.5 L4,3.3 L7.5,0.5" fill="none" stroke="#555" stroke-width="0.9"/></svg>
 <div class="t" style="-webkit-text-stroke:0.2px #2a2a2a;left:8.64px;top:234.00px;font-size:8.3px;color:#2a2a2a;transform:scaleX(0.967)">Support</div><div class="t" style="-webkit-text-stroke:0.2px #2a2a2a;left:8.60px;top:246.00px;font-size:8.3px;color:#2a2a2a;transform:scaleX(0.969)">Calls</div>
 <div class="a" style="left:412px;top:71px;width:56px;height:300px;background:#fff;border-left:1px solid #e2e2e2"></div>
 <div class="t" style="-webkit-text-stroke:0.2px #2a2a2a;left:420.82px;top:81.00px;font-size:8.3px;color:#2a2a2a;transform:scaleX(0.965)">Tasks</div>
 <div class="t" style="-webkit-text-stroke:0.2px #2a2a2a;left:420.34px;top:110.00px;font-size:8.3px;color:#2a2a2a;transform:scaleX(0.960)">Directory</div>
 <div class="t" style="-webkit-text-stroke:0.2px #2a2a2a;left:420.34px;top:139.00px;font-size:8.3px;color:#2a2a2a;transform:scaleX(0.968)">People</div>
 <div class="a" style="left:68.5px;top:72px;width:335px;height:38px;border:1px dashed #bcdaf5;border-right:1px solid #c3def6;border-left:1px solid #c3def6;background:#f0f1f3"></div>
 <div class="a" style="left:68.5px;top:72px;width:335px;height:7px;background:#1e90f0"></div>
 <svg class="a" style="left:70px;top:72.5px" width="6" height="6" viewBox="0 0 6 6"><path d="M3,0 V6 M0,3 H6" stroke="#fff" stroke-width="1.3"/></svg>
 <div class="t" style="left:78.88px;top:73.00px;font-size:5.5px;color:#fff;transform:scaleX(0.974)">TreeView21</div>
 <div class="a" style="left:68.5px;top:110px;width:335px;height:28px;background:#dedede;border:1px dashed #c6c6c6"></div>
 <div class="a" style="left:151.5px;top:111px;width:0;height:26px;border-left:1px dashed #c4c4c4"></div>
 <div class="a" style="left:231px;top:111px;width:0;height:26px;border-left:1px dashed #c4c4c4"></div>
 <div class="a" style="left:314.5px;top:111px;width:0;height:26px;border-left:1px dashed #c4c4c4"></div>
 <div class="a" style="left:392.3px;top:111px;width:0;height:26px;border-left:1px dashed #c8c8c8"></div>
 <div class="a" style="left:393px;top:111px;width:5px;height:26px;background:#f5f5f5;border-right:1px dashed #8a8a8a"></div>
 <div class="a" style="left:398px;top:111px;width:5px;height:26px;background:#f4f4f4"></div>
 <div class="btn a" style="left:76px;top:115px;width:62px;height:19px"></div>
 <div class="btn a" style="left:156.5px;top:115px;width:68px;height:19px"></div>
 <div class="btn a" style="left:236.5px;top:115px;width:74.5px;height:19px"></div>
 <div class="btn a" style="left:317.5px;top:115px;width:71px;height:19px"></div>
 <div class="t" style="left:86.69px;top:121.00px;font-size:8px;color:#555;transform:scaleX(0.856)">SELECT ALL</div>
 <div class="t" style="left:167.90px;top:121.00px;font-size:8px;color:#555;transform:scaleX(0.822)">SELECT NODE</div>
 <div class="t" style="left:247.65px;top:121.00px;font-size:8px;color:#555;transform:scaleX(0.828)">DESELECT NODE</div>
 <div class="t" style="left:328.04px;top:121.00px;font-size:8px;color:#555;transform:scaleX(0.846)">DESELECT ALL</div>
</div>
<div class="a" style="left:160px;top:430px;width:491px;height:15px;background:#2c2c2c"></div>
<div class="a" style="left:160px;top:445px;width:491px;height:15px;background:#292929"></div><div class="a" style="left:651px;top:59px;width:1px;height:402px;background:#1a1a1a"></div>
<div class="a" style="left:160px;top:445px;width:71px;height:15px;background:#555;border-top:2px solid #2196f3"></div>
<div class="t" style="left:186.98px;top:447.00px;font-size:8px;color:#eee;transform:scaleX(0.933)">Page</div>
<div class="t" style="left:243.90px;top:447.00px;font-size:7.5px;color:#999;transform:scaleX(0.990)">notificational...</div>
<svg class="a" style="left:215px;top:434px" width="5" height="7" viewBox="0 0 5 7"><path d="M1,0.8 L4,3.5 L1,6.2" fill="none" stroke="#ccc" stroke-width="1"/></svg><svg class="a" style="left:256px;top:434px" width="5" height="7" viewBox="0 0 5 7"><path d="M1,0.8 L4,3.5 L1,6.2" fill="none" stroke="#ccc" stroke-width="1"/></svg><svg class="a" style="left:310px;top:434px" width="5" height="7" viewBox="0 0 5 7"><path d="M1,0.8 L4,3.5 L1,6.2" fill="none" stroke="#ccc" stroke-width="1"/></svg>
<div class="t" style="left:176.30px;top:433.00px;font-size:7.5px;color:#e0e0e0;transform:scaleX(0.988)">mainpage</div>
<div class="t" style="left:225.29px;top:433.00px;font-size:7.5px;color:#e0e0e0;transform:scaleX(0.978)">content</div>
<div class="t" style="left:265.41px;top:433.00px;font-size:7.5px;color:#e0e0e0;transform:scaleX(0.970)">mainContent</div>
<div class="t" style="left:323.04px;top:433.00px;font-size:7.5px;color:#2d8ff0;transform:scaleX(0.947)">TreeView21</div>


<div id="rpanel" class="a">
 <div class="a" style="left:0;top:0;width:168px;height:22px;background:#3a3a3a"></div>
 <div class="t" style="left:6.92px;top:4.00px;font-size:9.5px;color:#ddd;transform:scaleX(0.884)">wm-prefab: TreeView21</div>
 <div class="a" style="left:0;top:22px;width:168px;height:21px;background:#121212"></div>
 <div class="a" style="left:0;top:22px;width:34px;height:21px;background:#444;border-top:1.5px solid #2196f3"></div>
 <svg class="a" style="left:12.5px;top:27px" width="10" height="13" viewBox="0 0 10 13"><path d="M7.6,0.6 L9.6,1.9 L3.3,11.4 L1,12.4 L1.3,10 Z" fill="#eee"/></svg>
 <svg class="a" style="left:46px;top:27px" width="12" height="11" viewBox="0 0 12 11"><path d="M6,1 C2.8,1 0.8,3.2 0.8,5.8 C0.8,8.5 3,10 5,10 C6,10 6,9 5.5,8.3 C5,7.6 5.6,6.8 6.5,6.8 H8.5 C10.2,6.8 11.2,5.6 11.2,4.4 C11.2,2.6 9,1 6,1 Z" fill="none" stroke="#aaa" stroke-width="0.9"/><circle cx="3.3" cy="5.5" r="0.8" fill="#aaa"/><circle cx="4.5" cy="3.2" r="0.8" fill="#aaa"/><circle cx="7" cy="2.8" r="0.8" fill="#aaa"/><path d="M11.5,0.5 L6.5,6" stroke="#aaa" stroke-width="0.9"/></svg>
 <svg class="a" style="left:80px;top:27px" width="12" height="12" viewBox="0 0 12 12"><circle cx="5" cy="5" r="4.2" fill="none" stroke="#aaa" stroke-width="0.9"/><path d="M6,6 L7.5,11.5 L8.5,9 L11,8 Z" fill="#121212" stroke="#aaa" stroke-width="0.8"/></svg>
 <svg class="a" style="left:112px;top:29.5px" width="12" height="8" viewBox="0 0 12 8"><rect x="0.5" y="0.5" width="8.5" height="6" rx="0.6" fill="none" stroke="#aaa" stroke-width="0.8"/><rect x="7.5" y="2.8" width="4" height="4.7" fill="#121212" stroke="#aaa" stroke-width="0.8"/></svg>
 <svg class="a" style="left:146px;top:26px" width="10" height="13" viewBox="0 0 10 13"><path d="M5,0.8 L9.2,2.2 V6.5 C9.2,9.2 7.5,11 5,12.2 C2.5,11 0.8,9.2 0.8,6.5 V2.2 Z" fill="none" stroke="#aaa" stroke-width="0.9"/></svg>
 <div class="a" style="left:5px;top:49px;width:158px;height:17px;background:#2e2e2e;border:1px solid #555;border-radius:2px"></div>
 <svg class="a" style="left:11px;top:54px" width="8" height="8" viewBox="0 0 8 8"><circle cx="3.5" cy="3.5" r="2.7" fill="none" stroke="#aaa" stroke-width="0.9"/><path d="M5.5,5.5 L7.5,7.5" stroke="#aaa" stroke-width="0.9"/></svg>
 <div class="t" style="left:20.71px;top:54.00px;font-size:7px;color:#777;transform:scaleX(0.923)">Search...</div>
 <div class="a" style="left:0;top:68.5px;width:168px;height:1px;background:#333"></div>
 <div class="t" style="left:5.55px;top:79.00px;font-size:6.8px;color:#ddd;transform:scaleX(0.983)">Name</div>
 <div class="a" style="left:6px;top:90.5px;width:133px;height:16px;background:#2e2e2e;border:1px solid #555;border-radius:2px"></div>
 <div class="t" style="left:12.75px;top:94.00px;font-size:7.2px;color:#eee;transform:scaleX(0.898)">TreeView21</div>
 <div class="a" style="left:0.5px;top:114px;width:161px;height:37.5px;border:2px solid #f0852b;border-radius:1px"></div>
 <div class="t" style="left:5.96px;top:118.00px;font-size:7px;color:#ddd;transform:scaleX(0.908)">Tree Data</div>
 <div class="a" style="left:6px;top:129.5px;width:133px;height:16px;background:#2e2e2e;border:1px solid #555;border-radius:2px"></div>
 <div class="t" style="left:12.57px;top:134.00px;font-size:7.3px;color:#2196f3;transform:scaleX(0.898)">bind:Variables.treeData.dataSet</div>
 <svg class="a" style="left:129.5px;top:133.5px" width="8" height="8" viewBox="0 0 8 8"><path d="M0.8,0.8 L7.2,7.2 M7.2,0.8 L0.8,7.2" stroke="#ccc" stroke-width="0.8"/></svg>
 <svg class="a" style="left:143.5px;top:132px" width="11" height="11" viewBox="0 0 11 11"><g transform="rotate(-45 5.5 5.5)"><rect x="0.6" y="3.8" width="5.8" height="3.4" rx="1.7" fill="none" stroke="#2196f3" stroke-width="1"/><rect x="4.6" y="3.8" width="5.8" height="3.4" rx="1.7" fill="none" stroke="#2196f3" stroke-width="1"/></g></svg>
 <div class="a" style="left:0;top:155.5px;width:168px;height:13.5px;background:#1c1c1c"></div>
 <div class="t" style="left:5.36px;top:158.00px;font-size:8px;color:#ddd;transform:scaleX(0.970)">Layout</div>
 <div class="t" style="left:5.97px;top:178.00px;font-size:7px;color:#ddd;transform:scaleX(0.971)">Width</div>
 <div class="a" style="left:6px;top:190px;width:133px;height:16.5px;background:#2e2e2e;border:1px solid #555;border-radius:2px"></div>
 <div class="t" style="left:5.44px;top:217.00px;font-size:7px;color:#ddd;transform:scaleX(0.974)">Height</div>
 <div class="a" style="left:6px;top:228.5px;width:133px;height:16.5px;background:#2e2e2e;border:1px solid #555;border-radius:2px"></div>
 <div class="a" style="left:0;top:255.3px;width:168px;height:13.2px;background:#1c1c1c"></div>
 <div class="t" style="left:5.37px;top:257.00px;font-size:8px;color:#ddd;transform:scaleX(0.958)">Behavior</div>
 <div class="t" style="left:5.71px;top:279.00px;font-size:7px;color:#ddd;transform:scaleX(0.912)">Show</div>
 <div class="a" style="left:111px;top:276px;width:22px;height:13px;border-radius:6.5px;background:#ccc"></div>
 <div class="a" style="left:121px;top:276px;width:13px;height:13px;border-radius:50%;background:#2196f3"></div>
 <svg class="a" style="left:142.5px;top:277px" width="11" height="11" viewBox="0 0 11 11"><g transform="rotate(-45 5.5 5.5)"><rect x="0.6" y="3.8" width="5.8" height="3.4" rx="1.7" fill="none" stroke="#ccc" stroke-width="0.9"/><rect x="4.6" y="3.8" width="5.8" height="3.4" rx="1.7" fill="none" stroke="#ccc" stroke-width="0.9"/></g></svg>
 <div class="t" style="left:5.98px;top:301.00px;font-size:7px;color:#ddd;transform:scaleX(0.978)">Animation</div>
 <div class="a" style="left:6px;top:312px;width:133px;height:17px;background:#2e2e2e;border:1px solid #555;border-radius:2px"></div>
 <svg class="a" style="left:131px;top:318px" width="5" height="5" viewBox="0 0 5 5"><path d="M0,0.5 H5 L2.5,4.5 Z" fill="#ddd"/></svg>
</div>

<div class="a" style="left:156.5px;top:241px;width:3px;height:31px;background:#a0a0a0;border-radius:1px"></div>
</body></html>
